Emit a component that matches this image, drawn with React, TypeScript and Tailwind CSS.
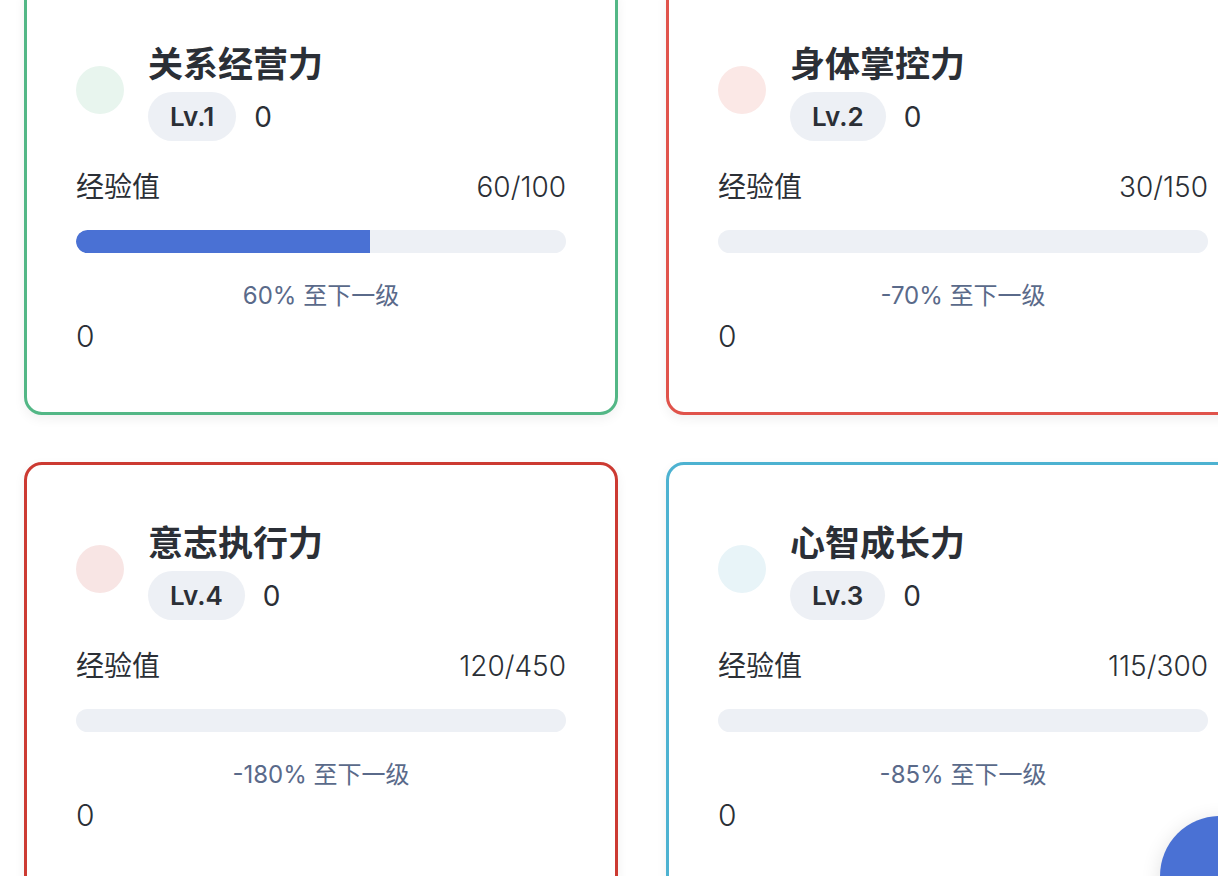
import React from "react";

type Skill = {
  name: string;
  level: number;
  cur: number;
  max: number;
  pct: number;
  border: string;
  dot: string;
};

const skills: Skill[] = [
  { name: "关系经营力", level: 1, cur: 60, max: 100, pct: 60, border: "border-[#53b786]", dot: "bg-[#e8f5ee]" },
  { name: "身体掌控力", level: 2, cur: 30, max: 150, pct: -70, border: "border-[#e0534b]", dot: "bg-[#fbe8e6]" },
  { name: "意志执行力", level: 4, cur: 120, max: 450, pct: -180, border: "border-[#cc3a32]", dot: "bg-[#f8e5e4]" },
  { name: "心智成长力", level: 3, cur: 115, max: 300, pct: -85, border: "border-[#4db2d1]", dot: "bg-[#e8f4f8]" },
];

function Card({ s }: { s: Skill }) {
  const w = Math.max(0, Math.min(100, s.pct));
  return (
    <div
      className={`w-[594px] shrink-0 rounded-[18px] border-[3px] ${s.border} bg-white px-[49px] pt-[52px] pb-[56px] shadow-[0_4px_12px_rgba(0,0,0,0.06)]`}
    >
      <div className="flex items-center gap-[24px]">
        <div className={`h-[48px] w-[48px] shrink-0 rounded-full ${s.dot}`} />
        <div className="flex flex-col items-start">
          <div className="text-[35px] leading-[52px] font-semibold text-[#2b2f36]">{s.name}</div>
          <div className="mt-[2px] flex items-center gap-[18px]">
            <div className="flex h-[49px] items-center rounded-full bg-[#edf0f5] px-[22px] text-[26px] font-semibold text-[#2b2f36]">
              Lv.{s.level}
            </div>
            <div className="text-[28px] leading-[40px] text-[#2b2f36]">0</div>
          </div>
        </div>
      </div>
      <div className="mt-[26px] flex items-center justify-between text-[28px] leading-[40px] text-[#2b2f36]">
        <span>经验值</span>
        <span className="font-light">
          {s.cur}/{s.max}
        </span>
      </div>
      <div className="mt-[23px] h-[23px] w-full overflow-hidden rounded-full bg-[#edf0f5]">
        <div className="h-full rounded-l-full bg-[#4a71d4]" style={{ width: `${w}%` }} />
      </div>
      <div className="mt-[26px] text-center text-[24px] leading-[34px] text-[#5a6a8a]">
        {s.pct}% 至下一级
      </div>
      <div className="mt-[3px] text-[30px] font-light leading-[40px] text-[#2b2f36]">0</div>
    </div>
  );
}

export default function App() {
  return (
    <div
      className="relative h-[876px] w-[1218px] overflow-hidden bg-white"
      style={{ fontFamily: 'Inter, "Noto Sans CJK SC", sans-serif' }}
    >
      <div className="-mt-[17px] grid w-[1300px] grid-cols-[594px_594px] gap-x-[48px] gap-y-[47px] pl-[24px]">
        {skills.map((s) => (
          <Card key={s.name} s={s} />
        ))}
      </div>
      <div className="absolute left-[1160px] top-[816px] h-[120px] w-[120px] rounded-full bg-[#4a71d4] shadow-[0_4px_20px_rgba(0,0,0,0.12)]" />
    </div>
  );
}
